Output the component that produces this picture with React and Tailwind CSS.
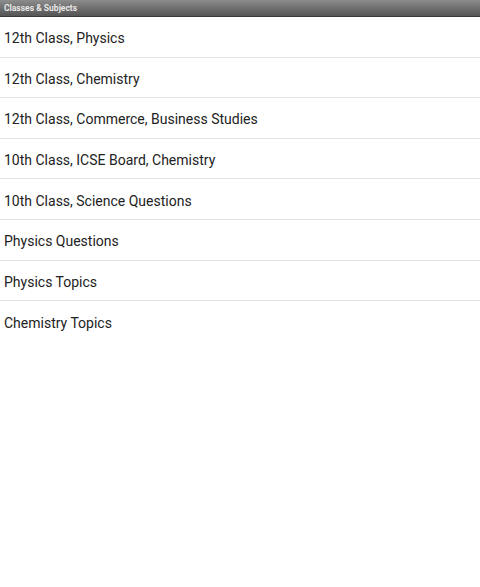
export default function App() {
  const items = [
    "12th Class, Physics",
    "12th Class, Chemistry",
    "12th Class, Commerce, Business Studies",
    "10th Class, ICSE Board, Chemistry",
    "10th Class, Science Questions",
    "Physics Questions",
    "Physics Topics",
    "Chemistry Topics",
  ];
  return (
    <div className="w-[480px] h-[587px] bg-white flex flex-col" style={{ fontFamily: "Roboto, 'Noto Sans', sans-serif" }}>
      <div className="h-[17px] flex items-center px-[4px] bg-gradient-to-b from-[#8c8c8c] to-[#555555] border-b border-[#3a3a3a]">
        <span className="text-[8.5px] font-bold text-[#e8e8e8] leading-none">Classes &amp; Subjects</span>
      </div>
      <div className="flex flex-col">
        {items.map((t, i) => (
          <div
            key={t}
            className={`h-[40.6px] flex items-center px-[4px] pt-[4px] text-[14px] text-[#222] ${i < items.length - 1 ? "border-b border-[#e2e2e2]" : ""}`}
          >
            {t}
          </div>
        ))}
      </div>
    </div>
  );
}
